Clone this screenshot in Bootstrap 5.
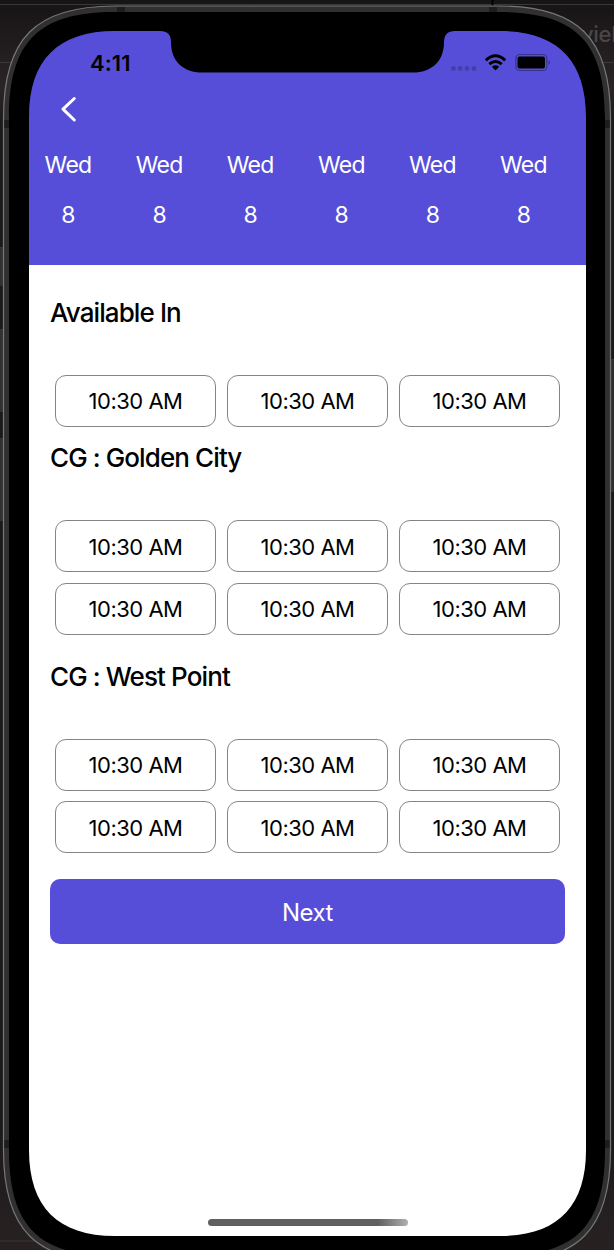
<!DOCTYPE html>
<html lang="en">
<head>
<meta charset="utf-8">
<meta name="viewport" content="width=device-width, initial-scale=1">
<title>Appointment</title>
<link href="https://cdn.jsdelivr.net/npm/bootstrap@5.3.0/dist/css/bootstrap.min.css" rel="stylesheet">
<style>
body{background:#211d1f;font-family:Inter,"Liberation Sans",sans-serif;color:#000;line-height:1}
.phone{width:614px;height:1250px;padding:31px 28px 14px 29px}
.screen{background:#fff}
.frame{pointer-events:none;z-index:2}
.topbar{background:#564ed9;height:234px}
.status{height:62px;padding:2px 35px 0 61px}
.status svg{margin-top:-2px}
.clock{font-size:22px;font-weight:600;letter-spacing:.1px}
.back{height:32px;padding-left:31px}
.days{margin:24px 0 0 -6.5px}
.day{width:91.1px;color:#fff;font-size:23px;line-height:33px;letter-spacing:-.7px}
.day span+span{margin-top:17px}
.sec{font-size:26px;font-weight:500;line-height:32px;padding-left:21px;letter-spacing:-.9px}
.slots{display:grid;grid-template-columns:repeat(3,161px);gap:10.5px 11px;padding-left:26px;margin-top:46px}
.slot{height:52px;border:1.3px solid #858585;border-radius:11px;font-size:22px;letter-spacing:-.5px;background:#fff;color:#000;padding:2px 0 0}
.next{height:65px;margin:26px 21px 0;border-radius:10px;background:#564ed9;color:#fff;font-size:24px;letter-spacing:-.5px;border:0;padding-top:8px}
.home{width:200px;height:7px;border-radius:4px;background:linear-gradient(90deg,#606060 0,#606060 85%,#b0b0b0 100%);margin-bottom:10px}
</style>
</head>
<body class="overflow-hidden">
<div class="phone position-relative">
  <main class="screen h-100 d-flex flex-column">
    <header class="topbar flex-shrink-0 overflow-hidden">
      <div class="status d-flex justify-content-between align-items-center">
        <span class="clock">4:11</span>
        <svg width="100" height="20" viewBox="451 52 100 20">
          <g fill="#453eae"><circle cx="453.400" cy="68.500" r="2.400"/><circle cx="460.200" cy="68.500" r="2.400"/><circle cx="467" cy="68.500" r="2.400"/><circle cx="474" cy="68.500" r="2.400"/></g>
          <g fill="none" stroke="#000" stroke-width="3"><path d="M485.800 60.300Q495.500 51.300 505.200 60.300M489.300 64.200Q495.500 58.700 501.700 64.200"/></g>
          <path d="M491.800 66.800Q495.500 63.900 499.200 66.800L495.500 70.600Z"/>
          <rect x="515.800" y="54.500" width="31" height="16" rx="4" fill="none" stroke="#38338d" stroke-width="1.200"/>
          <rect x="517.500" y="56.500" width="27.500" height="12" rx="2"/>
          <path d="M548.500 60v5q3-2.500 0-5" fill="#38338d"/>
        </svg>
      </div>
      <div class="back">
        <svg width="18" height="32" viewBox="60 93 18 32"><path d="M74.300 98.500L63 109.200 74.300 120" fill="none" stroke="#fff" stroke-width="3" stroke-linecap="round" stroke-linejoin="round"/></svg>
      </div>
      <div class="days d-flex">
        <div class="day d-flex flex-column align-items-center flex-shrink-0"><span>Wed</span><span>8</span></div>
        <div class="day d-flex flex-column align-items-center flex-shrink-0"><span>Wed</span><span>8</span></div>
        <div class="day d-flex flex-column align-items-center flex-shrink-0"><span>Wed</span><span>8</span></div>
        <div class="day d-flex flex-column align-items-center flex-shrink-0"><span>Wed</span><span>8</span></div>
        <div class="day d-flex flex-column align-items-center flex-shrink-0"><span>Wed</span><span>8</span></div>
        <div class="day d-flex flex-column align-items-center flex-shrink-0"><span>Wed</span><span>8</span></div>
      </div>
    </header>
    <h2 class="sec mb-0" style="margin-top:31.500px">Available In</h2>
    <div class="slots"><button class="btn slot">10:30 AM</button><button class="btn slot">10:30 AM</button><button class="btn slot">10:30 AM</button></div>
    <h2 class="sec mb-0" style="margin-top:15.500px">CG : Golden City</h2>
    <div class="slots"><button class="btn slot">10:30 AM</button><button class="btn slot">10:30 AM</button><button class="btn slot">10:30 AM</button><button class="btn slot">10:30 AM</button><button class="btn slot">10:30 AM</button><button class="btn slot">10:30 AM</button></div>
    <h2 class="sec mb-0" style="margin-top:26px">CG : West Point</h2>
    <div class="slots"><button class="btn slot">10:30 AM</button><button class="btn slot">10:30 AM</button><button class="btn slot">10:30 AM</button><button class="btn slot">10:30 AM</button><button class="btn slot">10:30 AM</button><button class="btn slot">10:30 AM</button></div>
    <button class="btn next">Next</button>
    <div class="home mt-auto mx-auto"></div>
  </main>
  <svg class="frame position-absolute top-0 start-0" width="614" height="1250" viewBox="0 0 614 1250">
    <defs>
      <linearGradient id="bg" x2="0" y2="1"><stop stop-color="#171415"/><stop offset=".07" stop-color="#2a2426"/><stop offset=".1" stop-color="#1c191c"/><stop offset=".9" stop-color="#1c191a"/><stop offset="1" stop-color="#272122"/></linearGradient>
    </defs>
    <!-- desktop behind the device -->
    <path fill="url(#bg)" fill-rule="evenodd" d="M0 0H614V1250H0ZM20 128C20 58 56 22 126 22H489C559 22 595 58 595 128V1139C595 1209 559 1245 489 1245H126C56 1245 20 1209 20 1139Z"/>
    <path d="M0 4.500H614M0 62.500H20M600 62.500H614M0 247.500H4M0 329.500H4M0 438.500H4M611 359.500H614M0 1241H40" stroke="#3a3738" fill="none"/>
    <path d="M0 248H4V286H0ZM0 330H4V412H0ZM0 439H4V521H0ZM611 360H614V492H611Z" fill="#303031"/>
    <path d="M492.500 0V6" stroke="#000" stroke-width="2"/>
    <text x="581" y="42" font-size="22" font-weight="500" letter-spacing="-.3" fill="#4a4647">viel</text>
    <!-- metal band, bezel and notch -->
    <path fill="#303031" fill-rule="evenodd" d="M3.500 118C3.500 38 36 6 115 6H499C578 6 610.500 38 610.500 118V1150C610.500 1230 578 1262 499 1262H115C36 1262 3.500 1230 3.500 1150ZM20 116V1151C20 1209 56 1245 114 1245H501C559 1245 595 1209 595 1151V116C595 58 559 22 501 22H114C56 22 20 58 20 116Z"/>
    <path d="M4 120H10V128H4ZM605 120H610V128H605ZM4 1140H10V1148H4ZM605 1140H610V1148H605ZM117 7H125V13H117ZM489 7H497V13H489Z" fill="#1d1d1e"/>
    <path fill="none" stroke="#777" stroke-width="1.200" d="M3.500 118C3.500 38 36 6 115 6H499C578 6 610.500 38 610.500 118V1150C610.500 1230 578 1262 499 1262H115C36 1262 3.500 1230 3.500 1150Z"/>
    <path fill="#000" fill-rule="evenodd" d="M9 118C9 41 39 12 115 12H499C575 12 605 41 605 118V1150C605 1227 575 1256 499 1256H115C39 1256 9 1227 9 1150ZM29 117C29 60 58 31 115 31H160Q171 31 171 42C171 62 184 72.500 202 72.500H413C431 72.500 444 62 444 42Q444 31 455 31H500C557 31 586 60 586 117V1150C586 1207 557 1236 500 1236H115C58 1236 29 1207 29 1150Z"/>
  </svg>
</div>
<script src="https://cdn.jsdelivr.net/npm/bootstrap@5.3.0/dist/js/bootstrap.bundle.min.js"></script>
</body>
</html>
